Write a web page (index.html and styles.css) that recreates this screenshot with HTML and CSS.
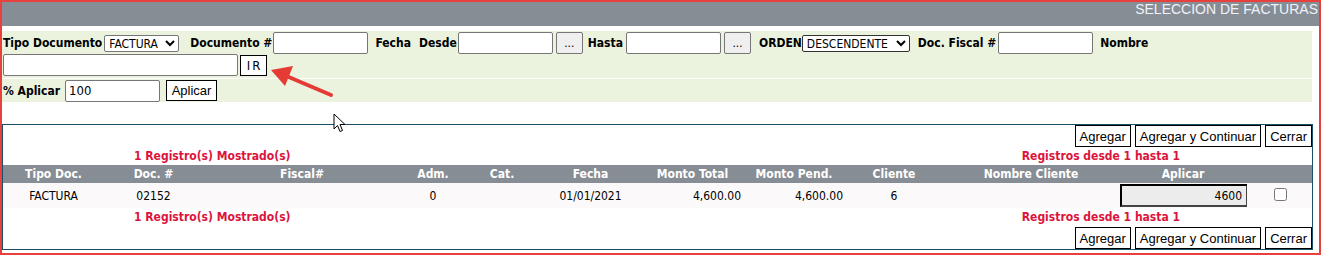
FILE: index.html
```html
<!DOCTYPE html>
<html lang="es">
<head>
    <meta charset="UTF-8">
    <title>Seleccion de Facturas</title>
    <link rel="stylesheet" href="styles.css">
</head>
<body>
    <div class="page">
        <div class="titlebar">SELECCION DE FACTURAS</div>

        <div class="filters">
            <div class="filter-row line-wrap">
                <label class="lbl first lbl-tipo">Tipo Documento</label>
                <select class="sel sel-tipo"><option>FACTURA</option></select>
                <label class="lbl lbl-doc">Documento #</label>
                <input class="txt" type="text">
                <label class="lbl lbl-fecha">Fecha</label>
                <label class="lbl lbl-desde">Desde</label>
                <input class="txt" type="text">
                <button class="dots">...</button>
                <label class="lbl lbl-near">Hasta</label>
                <input class="txt" type="text">
                <button class="dots">...</button>
                <label class="lbl lbl-orden">ORDEN</label>
                <select class="sel sel-orden"><option>DESCENDENTE</option></select>
                <label class="lbl lbl-fiscal">Doc. Fiscal #</label>
                <input class="txt" type="text">
                <label class="lbl lbl-nombre">Nombre</label>
                <input class="txt txt-nombre" type="text">
                <button class="btn btn-ir">IR</button>
            </div>
            <div class="filter-row line-apply">
                <label class="lbl first lbl-pct">% Aplicar</label>
                <input class="txt" type="text" value="100">
                <button class="btn btn-aplicar">Aplicar</button>
            </div>
        </div>

        <div class="results">
            <div class="actions">
                <button class="btn">Agregar</button>
                <button class="btn">Agregar y Continuar</button>
                <button class="btn">Cerrar</button>
            </div>
            <div class="counter">
                <span>1 Registro(s) Mostrado(s)</span>
                <span>Registros desde 1 hasta 1</span>
            </div>
            <table class="grid">
                <colgroup>
                    <col style="width:101px"><col style="width:99px"><col style="width:198px">
                    <col style="width:64px"><col style="width:74px"><col style="width:103px">
                    <col style="width:101px"><col style="width:102px"><col style="width:98px">
                    <col style="width:176px"><col style="width:128px"><col style="width:65px">
                </colgroup>
                <thead>
                    <tr>
                        <th>Tipo Doc.</th>
                        <th>Doc. #</th>
                        <th>Fiscal#</th>
                        <th>Adm.</th>
                        <th>Cat.</th>
                        <th>Fecha</th>
                        <th>Monto Total</th>
                        <th>Monto Pend.</th>
                        <th>Cliente</th>
                        <th>Nombre Cliente</th>
                        <th>Aplicar</th>
                        <th></th>
                    </tr>
                </thead>
                <tbody>
                    <tr>
                        <td>FACTURA</td>
                        <td>02152</td>
                        <td></td>
                        <td>0</td>
                        <td></td>
                        <td>01/01/2021</td>
                        <td class="num">4,600.00</td>
                        <td class="num">4,600.00</td>
                        <td>6</td>
                        <td></td>
                        <td><input class="apply-input" type="text" value="4600" readonly></td>
                        <td><input class="chk" type="checkbox"></td>
                    </tr>
                </tbody>
            </table>
            <div class="counter counter-bottom">
                <span>1 Registro(s) Mostrado(s)</span>
                <span>Registros desde 1 hasta 1</span>
            </div>
            <div class="actions">
                <button class="btn">Agregar</button>
                <button class="btn">Agregar y Continuar</button>
                <button class="btn">Cerrar</button>
            </div>
        </div>

        <!-- annotation arrow -->
        <svg class="note-arrow" width="80" height="45" viewBox="0 0 80 45">
            <line x1="69" y1="35" x2="22" y2="15" stroke="#e53b35" stroke-width="4" stroke-linecap="round"/>
            <polygon points="9,10 31,6 23,26" fill="#e53b35"/>
        </svg>

        <!-- mouse pointer -->
        <svg class="pointer" width="14" height="21" viewBox="0 0 14 21">
            <path d="M1 1 L1 16 L4.5 12.5 L7 18.5 L9.5 17.5 L7 11.5 L12 11.5 Z" fill="#fff" stroke="#000" stroke-width="1" stroke-linejoin="round"/>
        </svg>
    </div>
</body>
</html>
```

FILE: styles.css
```css
body {
    margin: 0;
    font-family: Tahoma, "DejaVu Sans Condensed", "DejaVu Sans", sans-serif;
    font-size: 12px;
    color: #000;
    background: #fff;
}

.page {
    position: relative;
    width: 1321px;
    height: 255px;
    border: 2px solid #e8413d;
    box-sizing: border-box;
    overflow: hidden;
}

.titlebar {
    height: 24px;
    background: #878d94;
    color: #eef3f9;
    font-family: "Liberation Sans", Arial, sans-serif;
    font-size: 14px;
    line-height: 15px;
    text-align: right;
    padding-right: 1px;
}

.filters {
    width: 1310px;
    margin-top: 5px;
    background: #fff;
}

.filter-row {
    display: flex;
    flex-wrap: wrap;
    align-items: center;
    background: #ebf3df;
    padding-left: 1px;
}

.line-wrap {
    height: 47px;
    padding-top: 1px;
    box-sizing: border-box;
    align-content: flex-start;
}

.line-apply {
    height: 23px;
    margin-top: 1px;
}

.lbl {
    font-weight: bold;
    margin: 0 3px 0 8px;
    white-space: nowrap;
}

.lbl.first {
    margin-left: 0;
}

.lbl-tipo {
    margin-right: 2px;
}

.lbl-doc {
    margin-left: 11px;
    margin-right: 1px;
}

.lbl-fecha {
    margin-left: 7px;
}

.lbl-desde {
    margin-left: 5px;
    margin-right: 1px;
}

.lbl-near {
    margin-left: 5px;
}

.lbl-orden {
    margin-right: 0;
}

.lbl-fiscal {
    margin-right: 2px;
}

.lbl-nombre {
    margin-left: 7px;
}

.lbl-pct {
    margin-right: 5px;
}

.txt {
    width: 95px;
    height: 22px;
    box-sizing: border-box;
    border: 1px solid #767676;
    border-radius: 2px;
    padding: 1px 3px;
    font-family: Tahoma, "DejaVu Sans Condensed", "DejaVu Sans", sans-serif;
    font-size: 13px;
    background: #fff;
}

.txt-nombre {
    width: 235px;
}

.sel {
    height: 17px;
    box-sizing: border-box;
    border: 1px solid #767676;
    border-radius: 2px;
    font-family: Tahoma, "DejaVu Sans Condensed", "DejaVu Sans", sans-serif;
    font-size: 12px;
    padding: 0;
    background: #fff;
}

.sel-tipo {
    width: 75px;
}

.sel-orden {
    width: 108px;
    border-color: #333;
}

.dots {
    width: 27px;
    height: 22px;
    margin-left: 3px;
    background: #efefef;
    border: 1px solid #767676;
    border-radius: 2px;
    font-size: 12px;
    padding: 0;
    color: #000;
}

.btn {
    height: 22px;
    box-sizing: border-box;
    background: #fff;
    border: 1px solid #000;
    font-family: "Liberation Sans", Arial, sans-serif;
    font-size: 13px;
    padding: 0 4px;
    color: #000;
}

.btn-ir {
    width: 27px;
    height: 21px;
    margin-left: 2px;
    padding: 0;
    letter-spacing: 2px;
    font-family: Tahoma, "DejaVu Sans Condensed", "DejaVu Sans", sans-serif;
    font-size: 13px;
    text-indent: 2px;
}

.btn-aplicar {
    width: 51px;
    height: 21px;
    margin-left: 6px;
    padding: 0;
}

.results {
    width: 1311px;
    box-sizing: border-box;
    margin-top: 22px;
    border: 1px solid #1d4e68;
    height: 126px;
}

.actions {
    display: flex;
    justify-content: flex-end;
    gap: 4px;
}

.actions .btn {
    height: 22px;
}

.counter {
    display: flex;
    justify-content: space-between;
    height: 18px;
    line-height: 18px;
    padding: 0 132px 0 131px;
    color: #dc143c;
    font-weight: bold;
}

.counter-bottom {
    height: 19px;
    line-height: 19px;
}

.grid {
    border-collapse: collapse;
    table-layout: fixed;
    width: 1309px;
}

.grid th {
    background: #878d94;
    color: #fff;
    font-weight: bold;
    height: 18px;
    padding: 0;
    text-align: center;
}

.grid td {
    background: #fbf9f9;
    height: 25px;
    padding: 0;
    text-align: center;
}

.grid td.num {
    text-align: right;
    padding-right: 2px;
}

.apply-input {
    display: block;
    width: 128px;
    height: 23px;
    box-sizing: border-box;
    margin-left: 1px;
    border: 2px inset #444;
    background: #ececec;
    text-align: right;
    padding: 0 4px;
    font-family: Tahoma, "DejaVu Sans Condensed", "DejaVu Sans", sans-serif;
    font-size: 12px;
}

.chk {
    width: 13px;
    height: 13px;
    margin: 0 0 0 2px;
}

.note-arrow {
    position: absolute;
    left: 260px;
    top: 58px;
}

.pointer {
    position: absolute;
    left: 331px;
    top: 111px;
}
```
